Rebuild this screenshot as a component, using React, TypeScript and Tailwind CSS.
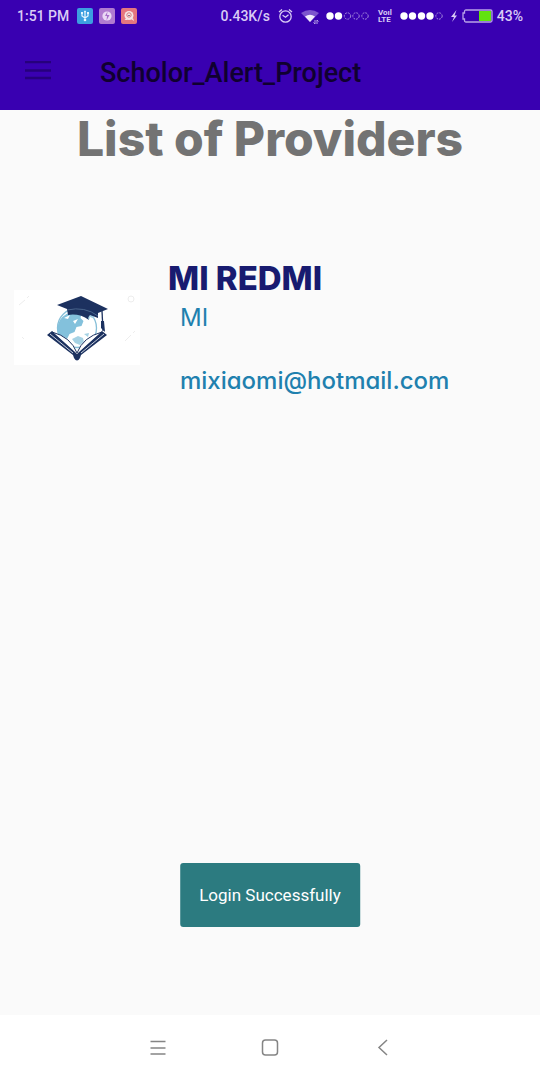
import React from "react";

function StatusBar() {
  return (
    <div className="flex h-8 items-center justify-between px-[17px] text-[14px] font-medium text-[#d9ccf5]">
      <div className="flex items-center gap-1.5">
        <span className="pr-0.5">1:51 PM</span>
        <svg width="16" height="16" viewBox="0 0 16 16" aria-label="USB connected">
          <rect width="16" height="16" rx="2" fill="#3c9ee0" />
          <g fill="none" stroke="#e8f7ff" strokeWidth="1.2">
            <path d="M8 3v9M5 5v3l3 2 3-2V5" />
          </g>
          <circle cx="8" cy="12" r="1.3" fill="#e8f7ff" />
          <path d="M6.7 4.2L8 2.3l1.3 1.9zM4 4h2v2H4zM10 4h2v2h-2z" fill="#e8f7ff" />
        </svg>
        <svg width="16" height="16" viewBox="0 0 16 16" aria-label="Data saver">
          <rect width="16" height="16" rx="2" fill="#b07bd0" />
          <circle cx="8" cy="8" r="4.6" fill="#ead8f5" />
          <path d="M8.5 3.5L6 8h2l-.5 4.5L10.5 7H8z" fill="#a66cca" />
        </svg>
        <svg width="16" height="16" viewBox="0 0 16 16" aria-label="Notification">
          <rect width="16" height="16" rx="2" fill="#e5767e" />
          <circle cx="8" cy="7.5" r="4.5" fill="#f5e6e6" />
          <path d="M3.5 12l2-2 1 2zM10 11l3 2-1-3z" fill="#f5e6e6" />
          <circle cx="8" cy="7" r="2.2" fill="none" stroke="#d77b82" />
          <path d="M7 7h2v1H7z" fill="#8c7882" />
        </svg>
      </div>
      <div className="flex items-center">
        <span>0.43K/s</span>
        <svg className="ml-2" width="15" height="16" viewBox="0 0 15 16" fill="none" stroke="#d9ccf5" strokeWidth="1.3" aria-label="Alarm">
          <circle cx="7.5" cy="8.5" r="5.7" />
          <path d="M1 4l3-2.6M14 4l-3-2.6M4.6 7.3l2.9 2 3-2.6" />
        </svg>
        <svg className="ml-2" width="19" height="17" viewBox="0 0 19 17" aria-label="Wi-Fi">
          <path d="M0 5Q9 -1 18 5L9 14z" fill="#7c55cd" />
          <path d="M4 8.5Q9 5 14 8.5L9 14z" fill="#f1ebfc" />
          <path d="M14 12v4l-1.5-1.5M16 16v-4l1.5 1.5" fill="none" stroke="#b9a2e8" />
        </svg>
        <svg className="ml-1.5" width="44" height="8" viewBox="0 0 44 8" aria-label="SIM 1 signal">
          <g fill="#fff"><circle cx="4" cy="4" r="3.7" /><circle cx="12.5" cy="4" r="3.7" /></g>
          <g fill="none" stroke="#a58bdd" strokeDasharray="2 1"><circle cx="21.5" cy="4" r="3.2" /><circle cx="30" cy="4" r="3.2" /><circle cx="39" cy="4" r="3.2" /></g>
        </svg>
        <span className="ml-2 flex flex-col text-[8px] leading-[7px] font-bold"><span>Voıl</span><span>LTE</span></span>
        <svg className="ml-2" width="44" height="8" viewBox="0 0 44 8" aria-label="SIM 2 signal">
          <g fill="#fff"><circle cx="4" cy="4" r="3.7" /><circle cx="12.5" cy="4" r="3.7" /><circle cx="21.5" cy="4" r="3.7" /><circle cx="30" cy="4" r="3.7" /></g>
          <circle cx="39" cy="4" r="3.2" fill="none" stroke="#a58bdd" strokeDasharray="2 1" />
        </svg>
        <svg className="ml-1.5" width="8" height="14" viewBox="0 0 8 14" aria-label="Charging">
          <path d="M6.5 1L1 8h3L2 13l5-6.500H4.500z" fill="#d9ccf5" />
        </svg>
        <svg className="ml-1" width="31" height="14" viewBox="0 0 31 14" aria-label="Battery">
          <path d="M4 1h24.5q1.5 0 1.5 1.5v9q0 1.5-1.5 1.5H4q-1.5 0-1.5-1.5V10H1V4h1.5V2.5Q2.5 1 4 1z" fill="none" stroke="#b9a2e8" strokeWidth="1.3" />
          <path d="M17 2h12v10H17z" fill="#62e30f" />
        </svg>
        <span className="ml-1">43%</span>
      </div>
    </div>
  );
}

function ProviderLogo() {
  return (
    <svg className="mt-7 h-[75px] w-[126px] shrink-0 bg-white" viewBox="0 0 126 75" role="img" aria-label="Graduation cap over a globe and open book">
      <circle cx="63" cy="38" r="19.5" fill="#fff" stroke="#86bfd8" strokeWidth="1.3" />
      <path d="M43.5 39q0-10 9-15l9-3 6 3-1 4 3 3-2 5-5 1-2 5-5 2-3 6-5 1q-4-6-4-12z" fill="#83c1dc" />
      <path d="M69 23l8 1 4 5-5-2-1 3-4-3zM58 49l6-3 5 2 1 4-4 3-5-2zM70 44l5-1-1 4z" fill="#a6d2e4" />
      <path d="M50 28l6-3-2 4zM59 31l5-2-3 5z" fill="#fff" />
      <path d="M33 45l5-4 25 22 25-22 5 4-26 20-1 3q-3 5-6 0l-1-3z" fill="#1c315f" />
      <path d="M40 43q17 4 23 19 6-15 23-19L65 62l-2 2-2-2z" fill="#fff" />
      <path d="M38 42q19 5 25 21 6-16 25-21" fill="none" stroke="#1c315f" />
      <path d="M36 44l23 19M90 44L67 63" fill="none" stroke="#c7cfdd" strokeWidth="1" />
      <path d="M43 15L67 6l27 13-10 4v5l-8-3q-3 3-1 5-10-7-21-5l-1-6z" fill="#1c315f" />
      <path d="M53 20q18-4 31 6" fill="none" stroke="#49658c" />
      <path d="M88 21l1 20" fill="none" stroke="#1c315f" strokeWidth="1.3" />
      <path d="M87 31h3l1 11-4-4z" fill="#1c315f" />
      <g fill="none" stroke="#ededed"><circle cx="117" cy="9" r="3" /><path d="M5 15l6-5m2-2 2-2M111 51l6-6m2-2 2-2M8 47l2 2" /></g>
    </svg>
  );
}

export default function App() {
  return (
    <div className="relative flex min-h-screen flex-col bg-[#fafafa] font-['Roboto',sans-serif]">
      <header className="bg-[#3900b1]">
        <StatusBar />
        <div className="flex h-[78px] items-center px-6">
          <button type="button" aria-label="Open menu" className="flex h-7 w-7 items-center justify-center">
            <svg width="28" height="20" viewBox="0 0 28 20" stroke="#26007c" strokeWidth="2.4">
              <path d="M1 1h26M1 9.500h26M1 17h26" />
            </svg>
          </button>
          <h1 className="ml-12 pt-1 text-[27px] leading-8 font-medium text-[#100030]">Scholor_Alert_Project</h1>
        </div>
      </header>

      <main className="flex-1 font-['Inter',sans-serif]">
        <h2 className="text-center text-[48px] leading-[58px] font-extrabold text-[#737373]">List of Providers</h2>
        <article className="mt-[94px] flex gap-7 px-3.5">
          <ProviderLogo />
          <div className="min-w-0">
            <h3 className="text-[33px] leading-8 font-extrabold text-[#181b70]">MI REDMI</h3>
            <div className="pl-3 text-[24px] leading-8 text-[#2080ae] [font-feature-settings:'cv11']">
              <p className="mt-2">MI</p>
              <p className="mt-[31px] font-medium">mixiaomi@hotmail.com</p>
            </div>
          </div>
        </article>
      </main>

      <div role="status" className="absolute bottom-[153px] left-1/2 -translate-x-1/2 rounded-[3px] bg-[#2c7b80] px-[19px] py-5 text-[17px] leading-6 whitespace-nowrap text-white">
        Login Successfully
      </div>

      <nav className="flex h-[65px] items-center justify-between bg-white px-[146px]">
        <button type="button" aria-label="Recent apps" className="flex h-6 w-6 items-center justify-center">
          <svg width="18" height="16" viewBox="0 0 18 16" stroke="#858585" strokeWidth="1.5"><path d="M1.500 1.500h15M1.500 8h15M1.500 14h15" /></svg>
        </button>
        <button type="button" aria-label="Home" className="flex h-6 w-6 items-center justify-center">
          <svg width="18" height="18" viewBox="0 0 18 18" fill="none" stroke="#858585" strokeWidth="1.5"><rect x="1.500" y="1" width="15" height="15" rx="3" /></svg>
        </button>
        <button type="button" aria-label="Back" className="flex h-6 w-6 items-center justify-center">
          <svg width="12" height="18" viewBox="0 0 12 18" fill="none" stroke="#858585" strokeWidth="1.5"><path d="M11 1L3 8.5l8 7.5" /></svg>
        </button>
      </nav>
    </div>
  );
}
